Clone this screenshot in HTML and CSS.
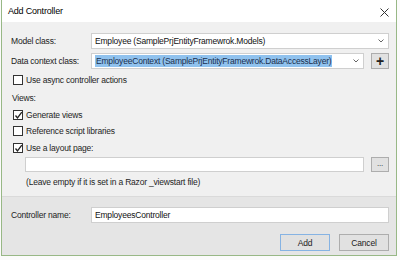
FILE: index.html
```html
<!DOCTYPE html>
<html lang="en">
<head>
    <meta charset="UTF-8">
    <title>Add Controller</title>
    <link rel="stylesheet" href="styles.css">
</head>
<body>
    <div class="dialog">
        <div class="titlebar">
            <span class="title">Add Controller</span>
            <svg class="close" width="9" height="9" viewBox="0 0 9 9">
                <path d="M0.5 0.5 L8.5 8.5 M8.5 0.5 L0.5 8.5" stroke="#333" stroke-width="1"/>
            </svg>
        </div>

        <div class="content">
            <div class="row">
                <label class="lbl">Model class:</label>
                <div class="select wide">
                    <span>Employee (SamplePrjEntityFramewrok.Models)</span>
                    <svg class="chev" width="6" height="4" viewBox="0 0 6 4"><path d="M0.5 0.5 L3 3 L5.5 0.5" stroke="#666" fill="none"/></svg>
                </div>
            </div>
            <div class="row gap4">
                <label class="lbl">Data context class:</label>
                <div class="select narrow">
                    <span class="selected">EmployeeContext (SamplePrjEntityFramewrok.DataAccessLayer)</span>
                    <svg class="chev" width="6" height="4" viewBox="0 0 6 4"><path d="M0.5 0.5 L3 3 L5.5 0.5" stroke="#666" fill="none"/></svg>
                </div>
                <div class="btn small plus">+</div>
            </div>

            <div class="check-row r-async">
                <span class="box"></span>Use async controller actions
            </div>
            <div class="plain r-views">Views:</div>
            <div class="check-row r-gen">
                <span class="box checked"><svg width="9" height="9" viewBox="0 0 9 9"><path d="M1.5 4.5 L3.5 7 L7.8 1.2" stroke="#222" stroke-width="1.3" fill="none"/></svg></span>Generate views
            </div>
            <div class="check-row r-ref">
                <span class="box"></span>Reference script libraries
            </div>
            <div class="check-row r-layout">
                <span class="box checked"><svg width="9" height="9" viewBox="0 0 9 9"><path d="M1.5 4.5 L3.5 7 L7.8 1.2" stroke="#222" stroke-width="1.3" fill="none"/></svg></span>Use a layout page:
            </div>
            <div class="row r-input">
                <div class="input layout-input"></div>
                <div class="btn small dots">...</div>
            </div>
            <div class="note">(Leave empty if it is set in a Razor _viewstart file)</div>
        </div>

        <div class="footer">
            <div class="row">
                <label class="lbl">Controller name:</label>
                <div class="input wide"><span>EmployeesController</span></div>
            </div>
            <div class="buttons">
                <div class="btn action default">Add</div>
                <div class="btn action">Cancel</div>
            </div>
        </div>
    </div>
</body>
</html>
```

FILE: styles.css
```css
body {
    margin: 0;
    background-color: #fbfbfb;
    font-family: "Liberation Sans", Arial, sans-serif;
    font-size: 8.5px;
    letter-spacing: -0.2px;
    color: #1e1e1e;
}
.dialog {
    width: 394px;
    height: 255px;
    margin-left: 1px;
    border: 1px solid #98b886;
    border-top: none;
    background-color: #f0f0f0;
    display: flex;
    flex-direction: column;
}
.titlebar {
    height: 22px;
    background-color: #ffffff;
    display: flex;
    align-items: center;
    justify-content: space-between;
    padding: 0 7px 0 6px;
    font-size: 9px;
    color: #000;
}
.close {
    margin-top: 2px;
}
.content {
    padding: 11px 7px 0 9px;
    height: 163px;
}
.row {
    display: flex;
    align-items: center;
    height: 16px;
}
.gap4 {
    margin-top: 4px;
}
.lbl {
    width: 80px;
    color: #222;
}
.select, .input {
    height: 16px;
    box-sizing: border-box;
    border: 1px solid #cfcfcf;
    background-color: #fff;
    display: flex;
    align-items: center;
    padding: 0 4px 0 3px;
    color: #111;
}
.select span {
    flex: 1;
    white-space: nowrap;
}
.wide {
    width: 298px;
}
.narrow {
    width: 273px;
}
.selected {
    flex: none !important;
    background-color: #90c2ee;
    color: #1b2f4d;
    padding: 1px 1px;
}
.chev {
    margin-left: auto;
}
.btn {
    box-sizing: border-box;
    border: 1px solid #adadad;
    background-color: #e1e1e1;
    display: flex;
    align-items: center;
    justify-content: center;
    color: #222;
}
.small {
    width: 18px;
    height: 16px;
    margin-left: 7px;
}
.plus {
    font-size: 14px;
    font-weight: bold;
    line-height: 1;
}
.dots {
    font-size: 8px;
    align-items: flex-end;
    padding-bottom: 3px;
    height: 15px;
}
.check-row, .plain {
    display: flex;
    align-items: center;
    height: 16px;
    padding-left: 2px;
}
.plain {
    padding-left: 1px;
}
.box {
    width: 10px;
    height: 10px;
    box-sizing: border-box;
    border: 1px solid #333;
    background-color: #fff;
    margin-right: 3px;
    display: flex;
    align-items: center;
    justify-content: center;
}
.box svg {
    flex: none;
}
.r-async {
    margin-top: 3px;
}
.r-views {
    margin-top: 2px;
}
.r-gen {
    margin-top: 1px;
}
.r-layout {
    margin-top: 1px;
}
.r-input {
    margin-top: 1px;
    height: 15px;
}
.layout-input {
    width: 341px;
    height: 15px;
    margin-left: 14px;
}
.note {
    margin-top: 2px;
    height: 16px;
    line-height: 16px;
    padding-left: 15px;
}
.footer {
    flex: 1;
    background-color: #e5e5e5;
    border-top: 1px solid #dadada;
    padding: 10px 7px 0 9px;
}
.buttons {
    display: flex;
    justify-content: flex-end;
    gap: 9px;
    margin-top: 11px;
}
.action {
    width: 50px;
    height: 17px;
}
.default {
    border-color: #86b3e3;
}
```
